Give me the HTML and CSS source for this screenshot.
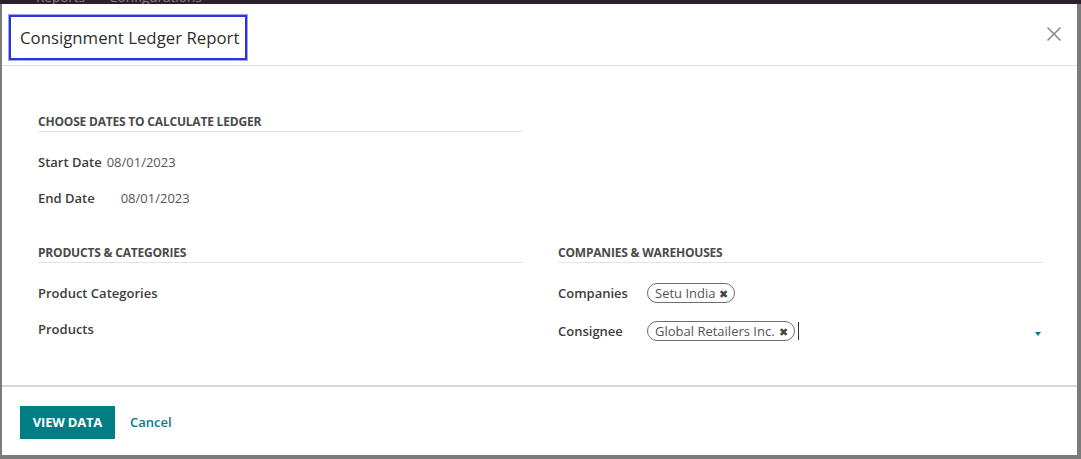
FILE: index.html
```html
<!DOCTYPE html>
<html>
<head>
<meta charset="utf-8">
<link rel="stylesheet" href="styles.css">
</head>
<body>
<div class="topbar"><span class="menu">Reports</span><span class="menu">Configurations</span></div>
<div class="frame">
  <div class="modal">
    <header class="modal-header">
      <h4 class="title-box">Consignment Ledger Report</h4>
      <button class="close" aria-label="Close">
        <svg width="16" height="16" viewBox="0 0 16 16"><path d="M1.5 1.5 L14.5 14.5 M14.5 1.5 L1.5 14.5" stroke="#8a8a8a" stroke-width="1.6" fill="none"/></svg>
      </button>
    </header>
    <main class="modal-body">
      <div class="cols">
        <section class="group">
          <div class="sep">CHOOSE DATES TO CALCULATE LEDGER</div>
          <div class="field"><span class="label">Start Date</span><span class="value v-start">08/01/2023</span></div>
          <div class="field"><span class="label">End Date</span><span class="value v-end">08/01/2023</span></div>
        </section>
        <section class="group"></section>
      </div>
      <div class="cols cols-2">
        <section class="group">
          <div class="sep">PRODUCTS &amp; CATEGORIES</div>
          <div class="field"><span class="label">Product Categories</span></div>
          <div class="field"><span class="label">Products</span></div>
        </section>
        <section class="group">
          <div class="sep">COMPANIES &amp; WAREHOUSES</div>
          <div class="field"><span class="label w90">Companies</span><span class="tag">Setu India <span class="x">✖</span></span></div>
          <div class="field field-c"><span class="label w90">Consignee</span><span class="tag">Global Retailers Inc. <span class="x">✖</span></span><span class="cursor"></span><span class="caret"></span></div>
        </section>
      </div>
    </main>
    <footer class="modal-footer">
      <button class="btn-primary">VIEW DATA</button>
      <button class="btn-link">Cancel</button>
    </footer>
  </div>
</div>
</body>
</html>
```

FILE: styles.css
```css
* { box-sizing: border-box; }
html, body { margin: 0; padding: 0; }
body {
  width: 1081px;
  height: 459px;
  overflow: hidden;
  background: #7b7b7b;
  font-family: "Open Sans", "Noto Sans", sans-serif;
  color: #4c4c4c;
}
.topbar {
  height: 4px;
  background: #2b2029;
  overflow: hidden;
  display: flex;
  gap: 24px;
  padding-left: 36px;
  line-height: 0;
}
.menu {
  color: #8d858b;
  font-size: 13.5px;
  line-height: 14px;
  margin-top: -10px;
  display: block;
  height: 14px;
}
.frame {
  padding: 0 4px 4px 2px;
  height: 455px;
}
.modal {
  background: #fff;
  height: 451px;
  display: flex;
  flex-direction: column;
}
.modal-header {
  height: 62px;
  border-bottom: 1px solid #dcdcdc;
  display: flex;
  align-items: flex-start;
  justify-content: space-between;
  padding: 11px 15px 0 7px;
}
.title-box {
  margin: 0;
  width: 238px;
  height: 45px;
  border: 2px solid #2a35e0;
  box-shadow: 0 0 0 1px #9aa6f0;
  display: flex;
  align-items: center;
  padding-left: 9px;
  font-size: 16.8px;
  font-weight: 500;
  color: #2e2e2e;
  white-space: nowrap;
}
.close {
  border: 0;
  background: none;
  padding: 0;
  margin-top: 11px;
  width: 16px;
  height: 16px;
  line-height: 0;
}
.modal-body {
  flex: 1;
  padding: 48px 34px 0 36px;
  border-bottom: 2px solid #d6d6de;
}
.cols {
  display: flex;
  gap: 35px;
}
.cols-2 { margin-top: 29px; }
.group { width: 485px; }
.sep {
  font-size: 12px;
  font-weight: 700;
  color: #4a4a4a;
  line-height: 16px;
  border-bottom: 1px solid #e2e2e2;
  height: 18px;
  letter-spacing: -0.2px;
  margin-bottom: 12px;
}
.field {
  display: flex;
  align-items: center;
  height: 36px;
  font-size: 13px;
}
.field-c { height: 38px; padding-top: 2px; }
.label {
  font-weight: 600;
  color: #3d3d3d;
}
.w90 { width: 90px; flex: none; }
.value { color: #555; }
.v-start { margin-left: 5px; }
.v-end { margin-left: 26px; }
.tag {
  display: inline-flex;
  align-items: center;
  height: 20px;
  border: 1px solid #6e6e6e;
  border-radius: 10px;
  padding: 0 6px 0 7px;
  font-size: 13px;
  color: #555;
  white-space: nowrap;
  margin-left: -1px;
}
.x { font-size: 11px; margin-left: 4px; color: #444; }
.cursor {
  width: 1px;
  height: 18px;
  background: #333;
  margin-left: 3px;
}
.caret {
  margin-left: auto;
  margin-right: 2px;
  margin-top: 6px;
  width: 0;
  height: 0;
  border-left: 3.5px solid transparent;
  border-right: 3.5px solid transparent;
  border-top: 4px solid #017e84;
}
.modal-footer {
  height: 68px;
  display: flex;
  align-items: center;
  padding: 2px 0 0 18px;
  gap: 15px;
}
.btn-primary {
  background: #017e84;
  color: #fff;
  border: 0;
  width: 95px;
  height: 33px;
  font-family: inherit;
  font-weight: 700;
  font-size: 13px;
  letter-spacing: -0.2px;
}
.btn-link {
  background: none;
  border: 0;
  color: #017e84;
  font-family: inherit;
  font-weight: 600;
  font-size: 13px;
  padding: 0;
}
```
